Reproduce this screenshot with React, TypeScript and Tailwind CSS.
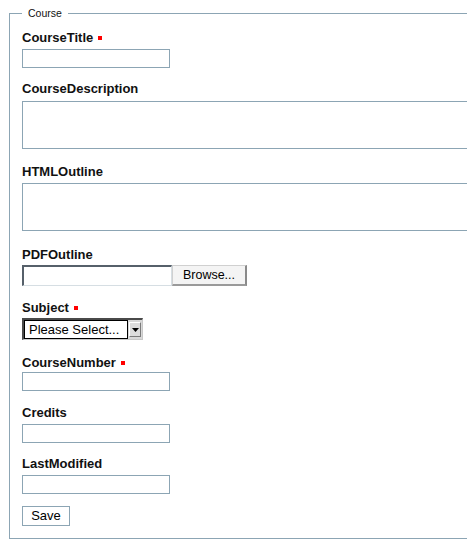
import React from 'react';

const labelFont = { fontFamily: '"Liberation Sans", Arial, sans-serif' };

function Label({ text, required }: { text: string; required?: boolean }) {
  return (
    <label className="block text-[13px] leading-[15px] font-bold text-[#111]">
      {text}
      {required && <span className="inline-block w-[4px] h-[4px] bg-[#ff0000] ml-[5px] align-[2px]" />}
    </label>
  );
}

function TextBox({ className = '' }: { className?: string }) {
  return <input type="text" className={`block w-[148px] h-[19px] border border-[#8ca5b4] bg-white outline-none ${className}`} />;
}

function TextArea({ className = '' }: { className?: string }) {
  return <textarea className={`block w-[470px] h-[48px] border border-[#8ca5b4] bg-white resize-none outline-none ${className}`} />;
}

export default function App() {
  return (
    <div className="w-[467px] h-[556px] overflow-hidden bg-white" style={labelFont}>
      <fieldset className="ml-[9px] mt-[7px] w-[520px] border border-[#8ca5b4] pl-[12px] pr-0 pt-[10px] pb-[12px]">
        <legend className="px-[6px] text-[10.5px] leading-[13px] text-[#111]">Course</legend>

        {/* CourseTitle */}
        <Label text="CourseTitle" required />
        <TextBox className="mt-[4px]" />

        {/* CourseDescription */}
        <div className="mt-[13px]">
          <Label text="CourseDescription" />
        </div>
        <TextArea className="mt-[5px]" />

        {/* HTMLOutline */}
        <div className="mt-[15px]">
          <Label text="HTMLOutline" />
        </div>
        <TextArea className="mt-[4px]" />

        {/* PDFOutline */}
        <div className="mt-[16px]">
          <Label text="PDFOutline" />
        </div>
        <div className="mt-[3px] flex h-[21px]">
          <div className="w-[150px] h-[21px] bg-white border-t-2 border-l-2 border-t-[#56606a] border-l-[#56606a] border-r border-b border-r-[#d6dee3] border-b-[#d6dee3]" />
          <button className="w-[75px] h-[21px] bg-[#f4f4f4] border-t border-l border-t-[#d0d0d0] border-l-[#d0d0d0] border-r-2 border-b-2 border-r-[#8a8a8a] border-b-[#9a9a9a] text-[12.5px] leading-[17px] text-black">
            Browse...
          </button>
        </div>

        {/* Subject */}
        <div className="mt-[14px]">
          <Label text="Subject" required />
        </div>
        <div className="mt-[3px] flex w-[121px] h-[22px] bg-[#d8d8d8] border-t-2 border-l-2 border-t-[#4a4a4a] border-l-[#4a4a4a] border-r border-b border-r-[#c8c8c8] border-b-[#c8c8c8]">
          <div className="flex-1 bg-white border border-black pl-[4px] text-[13px] leading-[17px] text-black whitespace-nowrap overflow-hidden">
            Please Select...
          </div>
          <div className="w-[12px] my-[2px] mx-[1px] bg-[#dcdcdc] border-t border-l border-t-white border-l-white border-r border-b border-r-[#7a7a7a] border-b-[#7a7a7a] flex items-center justify-center">
            <svg width="7" height="4" viewBox="0 0 7 4">
              <path d="M0 0h7L3.5 4z" fill="#000" />
            </svg>
          </div>
        </div>

        {/* CourseNumber */}
        <div className="mt-[15px]">
          <Label text="CourseNumber" required />
        </div>
        <TextBox className="mt-[2px]" />

        {/* Credits */}
        <div className="mt-[14px]">
          <Label text="Credits" />
        </div>
        <TextBox className="mt-[4px]" />

        {/* LastModified */}
        <div className="mt-[13px]">
          <Label text="LastModified" />
        </div>
        <TextBox className="mt-[4px]" />

        <button className="mt-[12px] block w-[48px] h-[20px] border border-[#8ca5b4] bg-white text-[13px] leading-[18px] text-black">
          Save
        </button>
      </fieldset>
    </div>
  );
}
